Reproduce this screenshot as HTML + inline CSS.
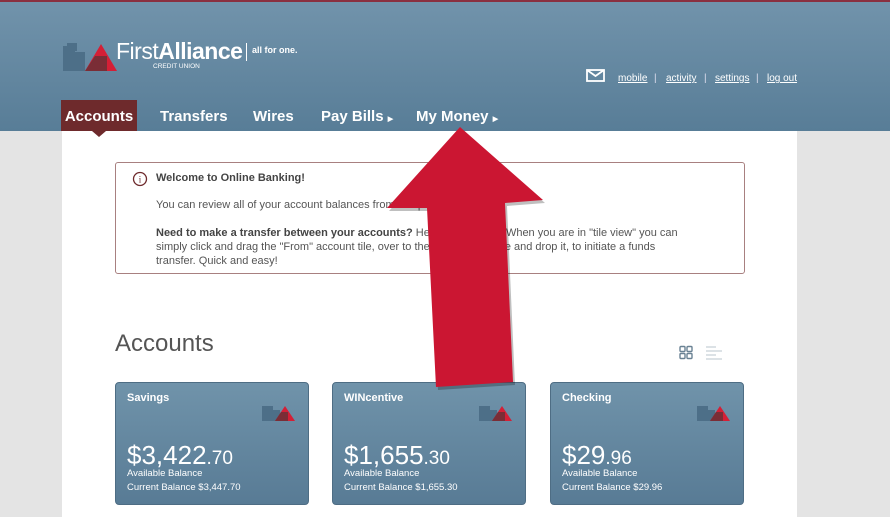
<!DOCTYPE html>
<html><head><style>
*{margin:0;padding:0;box-sizing:border-box}
body{width:890px;height:517px;overflow:hidden;background:#e4e4e4;font-family:"Liberation Sans",sans-serif;position:relative}
.hdr{position:absolute;left:0;top:0;width:890px;height:131px;background:linear-gradient(#7193ab,#587d97);border-top:2px solid #8a3040}
.main{position:absolute;left:62px;top:131px;width:735px;height:386px;background:#fff}
.nav{position:absolute;top:100px;height:31px;color:#fff;font-weight:bold;font-size:15px;line-height:33px;white-space:nowrap}
.act{background:#6e2a2c;}
.links{position:absolute;top:73px;font-size:10px;color:#fff;white-space:nowrap}
.links a{color:#fff;text-decoration:underline;position:absolute}
.bar{position:absolute;color:#dde;}
.box{position:absolute;left:115px;top:162px;width:630px;height:112px;border:1.5px solid #a88080;border-radius:3px;font-size:11px;color:#555}
.box p{position:absolute;left:40px;white-space:nowrap}
.tile{position:absolute;top:382px;width:194px;height:123px;border-radius:4px;background:linear-gradient(#7093aa,#587b95);color:#fff;border:1px solid #4e6d84}
.tile .t{position:absolute;left:11px;top:9px;font-weight:bold;font-size:11px}
.tile .amt{position:absolute;left:11px;top:57px;font-size:26px;font-weight:300}
.tile .amt small{font-size:19px}
.tile .l1{position:absolute;left:11px;top:85px;font-size:9.5px}
.tile .l2{position:absolute;left:11px;top:99px;font-size:9.5px}
.tile svg{position:absolute;left:146px;top:22px}
</style></head><body>
<div class="hdr"></div>
<div class="main"></div>
<svg style="position:absolute;left:63px;top:43px" width="56" height="28"><rect x="0" y="3" width="12" height="25" fill="#4d6f88"/><rect x="12" y="9" width="10" height="19" fill="#4d6f88"/><rect x="4" y="0" width="10" height="8" fill="#4d6f88"/><polygon points="22,28 38,1 54,28" fill="#d41f36"/><polygon points="22,28 32,13 44,13 44,28" fill="#7a2d36"/></svg>
<div style="position:absolute;left:116px;top:38px;color:#fff;font-size:23px;letter-spacing:-0.5px"><span style="font-weight:300">First</span><b>Alliance</b></div>
<div style="position:absolute;left:153px;top:63px;color:#fff;font-size:6.5px">CREDIT UNION</div>
<div style="position:absolute;left:246px;top:43px;width:1px;height:18px;background:#fff"></div>
<div style="position:absolute;left:252px;top:45px;color:#fff;font-weight:bold;font-size:9px">all for one.</div>
<svg style="position:absolute;left:586px;top:69px" width="19" height="13"><rect x="1" y="1" width="17" height="11" fill="none" stroke="#fff" stroke-width="1.8"/><polyline points="1,1 9.5,7 18,1" fill="none" stroke="#fff" stroke-width="1.8"/></svg>
<div class="links"><a style="left:618px">mobile</a><span class="bar" style="left:654px">|</span><a style="left:666px">activity</a><span class="bar" style="left:704px">|</span><a style="left:715px">settings</a><span class="bar" style="left:756px">|</span><a style="left:767px">log out</a></div>
<div class="nav act" style="left:61px;width:76px;text-align:center">Accounts</div>
<div style="position:absolute;left:92px;top:131px;border-left:7px solid transparent;border-right:7px solid transparent;border-top:6px solid #6e2a2c"></div>
<div class="nav" style="left:160px">Transfers</div>
<div class="nav" style="left:253px">Wires</div>
<div class="nav" style="left:321px">Pay Bills <span style="font-size:7px">▶</span></div>
<div class="nav" style="left:416px">My Money <span style="font-size:7px">▶</span></div>
<div class="box">
<svg style="position:absolute;left:16px;top:8px" width="16" height="16"><circle cx="8" cy="8" r="6.5" fill="none" stroke="#6e2a2c" stroke-width="1.3"/><text x="8" y="11.5" font-size="9" text-anchor="middle" fill="#6e2a2c" font-family="Liberation Serif">i</text></svg>
<p style="top:9px;font-weight:bold;color:#444">Welcome to Online Banking!</p>
<p style="top:36px">You can review all of your account balances from this page.</p>
<p style="top:64px"><b style="color:#444">Need to make a transfer between your accounts?</b> Here's a quick tip: When you are in "tile view" you can</p>
<p style="top:78px">simply click and drag the "From" account tile, over to the "To" account tile and drop it, to initiate a funds</p>
<p style="top:92px">transfer. Quick and easy!</p>
</div>
<div style="position:absolute;left:115px;top:330px;font-size:24px;color:#555;font-weight:300">Accounts</div>
<svg style="position:absolute;left:679px;top:345px" width="44" height="16"><g fill="none" stroke="#6a8294" stroke-width="1.4"><rect x="1" y="1.5" width="5" height="5" rx="1"/><rect x="8" y="1.5" width="5" height="5" rx="1"/><rect x="1" y="8.5" width="5" height="5" rx="1"/><rect x="8" y="8.5" width="5" height="5" rx="1"/></g><g stroke="#b8c4cc" stroke-width="1"><line x1="27" y1="2" x2="37" y2="2"/><line x1="27" y1="6" x2="43" y2="6"/><line x1="27" y1="10" x2="37" y2="10"/><line x1="27" y1="14" x2="43" y2="14"/></g></svg>
<div class="tile" style="left:115px"><div class="t">Savings</div><svg width="33" height="16"><rect x="0" y="1" width="11" height="15" fill="#4d6f88"/><rect x="11" y="5" width="7" height="11" fill="#4d6f88"/><polygon points="13,16 23,1 33,16" fill="#d41f36"/><polygon points="13,16 19,7 26,7 26,16" fill="#7a2d36"/></svg><div class="amt">$3,422<small>.70</small></div><div class="l1">Available Balance</div><div class="l2">Current Balance $3,447.70</div></div>
<div class="tile" style="left:332px"><div class="t">WINcentive</div><svg width="33" height="16"><rect x="0" y="1" width="11" height="15" fill="#4d6f88"/><rect x="11" y="5" width="7" height="11" fill="#4d6f88"/><polygon points="13,16 23,1 33,16" fill="#d41f36"/><polygon points="13,16 19,7 26,7 26,16" fill="#7a2d36"/></svg><div class="amt">$1,655<small>.30</small></div><div class="l1">Available Balance</div><div class="l2">Current Balance $1,655.30</div></div>
<div class="tile" style="left:550px"><div class="t">Checking</div><svg width="33" height="16"><rect x="0" y="1" width="11" height="15" fill="#4d6f88"/><rect x="11" y="5" width="7" height="11" fill="#4d6f88"/><polygon points="13,16 23,1 33,16" fill="#d41f36"/><polygon points="13,16 19,7 26,7 26,16" fill="#7a2d36"/></svg><div class="amt">$29<small>.96</small></div><div class="l1">Available Balance</div><div class="l2">Current Balance $29.96</div></div>
<svg style="position:absolute;left:0;top:0" width="890" height="517"><polygon points="460,127 543,200 505,203 513,382 436,387 427,208 387,208" fill="#000" opacity="0.25" transform="translate(2,3)"/><polygon points="460,127 543,200 505,203 513,382 436,387 427,208 387,208" fill="#cb1632"/></svg>
</body></html>
